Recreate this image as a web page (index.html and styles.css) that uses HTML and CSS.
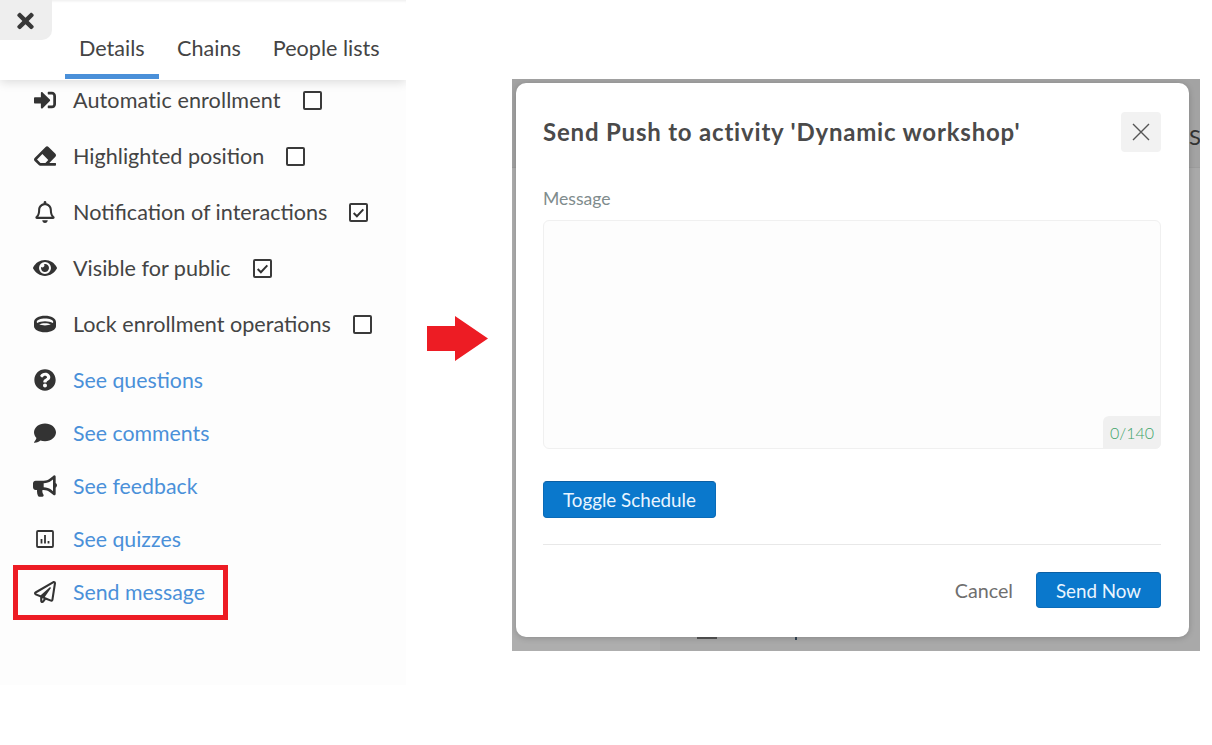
FILE: index.html
```html
<!DOCTYPE html>
<html lang="en">
<head>
<meta charset="utf-8">
<title>Send Push</title>
<link rel="stylesheet" href="styles.css">
</head>
<body>
<div class="page">
  <aside class="panel">
    <header class="panel-head">
      <button class="close-tab" type="button" aria-label="Close">
        <svg viewBox="0 0 352 512" class="close-glyph"><path d="M242.72 256l100.07-100.07c12.28-12.28 12.28-32.19 0-44.48l-22.24-22.24c-12.28-12.28-32.19-12.28-44.48 0L176 189.28 75.93 89.21c-12.28-12.28-32.19-12.28-44.48 0L9.21 111.45c-12.28 12.28-12.28 32.19 0 44.48L109.28 256 9.21 356.07c-12.28 12.28-12.28 32.19 0 44.48l22.24 22.24c12.28 12.28 32.2 12.28 44.48 0L176 322.72l100.07 100.07c12.28 12.28 32.2 12.28 44.48 0l22.24-22.24c12.28-12.28 12.28-32.19 0-44.48L242.72 256z"/></svg>
      </button>
      <nav class="tabs">
        <a class="tab tab-active">Details</a>
        <a class="tab">Chains</a>
        <a class="tab">People lists</a>
      </nav>
    </header>
    <ul class="list">
      <li class="row">
        <span class="ico"><svg viewBox="0 0 512 512"><path d="M416 448h-84c-6.6 0-12-5.4-12-12v-40c0-6.6 5.4-12 12-12h84c17.7 0 32-14.3 32-32V160c0-17.7-14.3-32-32-32h-84c-6.6 0-12-5.4-12-12V76c0-6.6 5.4-12 12-12h84c53 0 96 43 96 96v192c0 53-43 96-96 96zm-47-201L201 79c-15-15-41-4.5-41 17v96H24c-13.3 0-24 10.7-24 24v96c0 13.3 10.7 24 24 24h136v96c0 21.5 26 32 41 17l168-168c9.3-9.4 9.3-24.6 0-34z"/></svg></span>
        <span class="label label-wide">Automatic enrollment</span>
        <span class="check"></span>
      </li>
      <li class="row">
        <span class="ico"><svg viewBox="0 0 512 512"><path d="M497.941 273.941c18.745-18.745 18.745-49.137 0-67.882l-160-160c-18.745-18.745-49.136-18.746-67.883 0l-256 256c-18.745 18.745-18.745 49.137 0 67.882l96 96A48.004 48.004 0 0 0 144 480h356c6.627 0 12-5.373 12-12v-40c0-6.627-5.373-12-12-12H355.883l142.058-142.059zm-302.627-62.627l137.373 137.373L265.373 416H150.628l-80-80 124.686-124.686z"/></svg></span>
        <span class="label">Highlighted position</span>
        <span class="check"></span>
      </li>
      <li class="row">
        <span class="ico"><svg viewBox="0 0 448 512" class="narrow"><path d="M439.39 362.29c-19.32-20.76-55.47-51.99-55.47-154.29 0-77.7-54.48-139.9-127.94-155.16V32c0-17.67-14.32-32-31.98-32s-31.98 14.33-31.98 32v20.84C118.56 68.1 64.08 130.3 64.08 208c0 102.3-36.15 133.53-55.47 154.29-6 6.45-8.66 14.16-8.61 21.71.11 16.4 12.98 32 32.1 32h383.8c19.12 0 32-15.6 32.1-32 .05-7.55-2.61-15.27-8.61-21.71zM67.53 368c21.22-27.97 44.42-74.33 44.53-159.42 0-.2-.06-.38-.06-.58 0-61.86 50.14-112 112-112s112 50.14 112 112c0 .2-.06.38-.06.58.11 85.1 23.31 131.46 44.53 159.42H67.53zM224 512c35.32 0 63.97-28.65 63.97-64H160.03c0 35.35 28.65 64 63.97 64z"/></svg></span>
        <span class="label">Notification of interactions</span>
        <span class="check check-on"><svg viewBox="0 0 14 14"><path d="M2.5 7.5l3 3 6-6.5"/></svg></span>
      </li>
      <li class="row">
        <span class="ico"><svg viewBox="0 0 576 512" class="wide"><path d="M572.52 241.4C518.29 135.59 410.93 64 288 64S57.68 135.64 3.48 241.41a32.35 32.35 0 0 0 0 29.19C57.71 376.41 165.07 448 288 448s230.32-71.64 284.52-177.41a32.35 32.35 0 0 0 0-29.19zM288 400a144 144 0 1 1 144-144 143.93 143.93 0 0 1-144 144zm0-240a95.31 95.31 0 0 0-25.31 3.79 47.85 47.85 0 0 1-66.9 66.9A95.78 95.78 0 1 0 288 160z"/></svg></span>
        <span class="label">Visible for public</span>
        <span class="check check-on"><svg viewBox="0 0 14 14"><path d="M2.5 7.5l3 3 6-6.5"/></svg></span>
      </li>
      <li class="row">
        <span class="ico"><svg viewBox="0 0 512 512"><path d="M256 64C110.06 64 0 125.91 0 208v98.13C0 384.48 114.62 448 256 448s256-63.52 256-141.87V208c0-82.09-110.06-144-256-144zm0 64c106.04 0 192 35.82 192 80 0 9.26-3.97 18.12-10.91 26.39C392.15 208.21 328.17 192 256 192s-136.15 16.21-181.09 42.39C67.97 226.12 64 217.26 64 208c0-44.18 85.96-80 192-80zM120.43 264.64C155.04 249.93 201.64 240 256 240s100.96 9.93 135.57 24.64C356.84 279.07 308.93 288 256 288s-100.84-8.93-135.57-23.36z"/></svg></span>
        <span class="label">Lock enrollment operations</span>
        <span class="check"></span>
      </li>
      <li class="row row-link">
        <span class="ico"><svg viewBox="0 0 512 512"><path d="M504 256c0 136.997-111.043 248-248 248S8 392.997 8 256C8 119.083 119.043 8 256 8s248 111.083 248 248zM262.655 90c-54.497 0-89.255 22.957-116.549 63.758-3.536 5.286-2.353 12.415 2.715 16.258l34.699 26.31c5.205 3.947 12.621 3.008 16.665-2.122 17.864-22.658 30.113-35.797 57.303-35.797 20.429 0 45.698 13.148 45.698 32.958 0 14.976-12.363 22.667-32.534 33.976C247.128 238.528 216 254.941 216 296v4c0 6.627 5.373 12 12 12h56c6.627 0 12-5.373 12-12v-1.333c0-28.462 83.186-29.647 83.186-106.667 0-58.002-60.165-102-116.531-102zM256 338c-25.365 0-46 20.635-46 46 0 25.364 20.635 46 46 46s46-20.636 46-46c0-25.365-20.635-46-46-46z"/></svg></span>
        <a class="link">See questions</a>
      </li>
      <li class="row row-link">
        <span class="ico"><svg viewBox="0 0 512 512"><path d="M256 32C114.6 32 0 125.1 0 240c0 49.6 21.4 95 57 130.7C44.5 421.1 2.7 466 2.2 466.5c-2.2 2.3-2.8 5.7-1.5 8.7S4.8 480 8 480c66.3 0 116-31.8 140.6-51.4 32.7 12.3 69 19.4 107.4 19.4 141.4 0 256-93.1 256-208S397.4 32 256 32z"/></svg></span>
        <a class="link">See comments</a>
      </li>
      <li class="row row-link">
        <span class="ico"><svg viewBox="0 0 576 512" class="wide"><path d="M576 240c0-23.63-12.95-44.04-32-55.12V32.01C544 23.26 537.02 0 512 0c-7.12 0-14.19 2.38-19.98 7.02l-85.03 68.03C364.28 109.19 310.66 128 256 128H64c-35.35 0-64 28.65-64 64v96c0 35.35 28.65 64 64 64h33.7c-1.39 10.48-2.18 21.14-2.18 32 0 39.77 9.26 77.35 25.56 110.94 5.19 10.69 16.52 17.06 28.4 17.06h74.28c26.05 0 41.69-29.84 25.9-50.56-16.4-21.52-26.15-48.36-26.15-77.44 0-11.11 1.62-21.79 4.41-32H256c54.66 0 108.28 18.81 150.98 52.95l85.03 68.03a32.023 32.023 0 0 0 19.98 7.02c24.92 0 32-22.78 32-32V295.13C563.05 284.04 576 263.63 576 240zm-96 141.42l-33.05-26.44C392.95 311.78 325.12 288 256 288v-96c69.12 0 136.95-23.78 190.95-66.98L480 98.58v282.84z"/></svg></span>
        <a class="link">See feedback</a>
      </li>
      <li class="row row-link">
        <span class="ico"><svg viewBox="0 0 18 18" class="narrow poll"><rect x="1" y="1" width="16" height="16" rx="1"/><path d="M5.5 9v4.5M9 5v8.5M12.5 11v2.5"/></svg></span>
        <a class="link">See quizzes</a>
      </li>
      <li class="row row-link row-marked">
        <span class="ico"><svg viewBox="0 0 512 512"><path d="M440 6.5L24 246.4c-34.4 19.9-31.1 70.8 5.7 85.9L144 379.6V464c0 46.4 59.2 65.5 86.6 28.6l43.8-59.1 111.9 46.2c5.9 2.4 12.1 3.6 18.3 3.6 8.2 0 16.3-2.1 23.6-6.2 12.8-7.2 21.6-20 23.9-34.5l59.4-387.2c6.1-40.1-36.9-68.8-71.5-48.9zM192 464v-64.6l36.6 15.1L192 464zm212.6-28.7l-153.8-63.5L391 169.5c10.7-15.5-9.5-33.5-23.7-21.2L155.8 332.6 48 288 464 48l-59.4 387.3z"/></svg></span>
        <a class="link">Send message</a>
      </li>
    </ul>
  </aside>

  <div class="arrow-col">
    <svg class="arrow" viewBox="0 0 61 45"><path d="M0 10h28V0l33 22.5L28 45V35H0z"/></svg>
  </div>

  <section class="stage">
    <span class="behind-head"></span>
    <span class="behind-side"></span>
    <span class="behind-s">S</span>
    <span class="behind-a"></span>
    <span class="behind-b"></span>
    <div class="modal">
      <div class="modal-head">
        <h2 class="modal-title">Send Push to activity 'Dynamic workshop'</h2>
        <button class="modal-x" type="button" aria-label="Close">
          <svg viewBox="0 0 18 18"><path d="M1 1l16 16M17 1L1 17"/></svg>
        </button>
      </div>
      <label class="field-label" for="msg">Message</label>
      <div class="field">
        <textarea class="input" id="msg"></textarea>
        <span class="counter">0/140</span>
      </div>
      <div class="schedule">
        <button class="btn btn-toggle" type="button">Toggle Schedule</button>
      </div>
      <hr class="divider">
      <div class="modal-foot">
        <button class="cancel" type="button">Cancel</button>
        <button class="btn btn-send" type="button">Send Now</button>
      </div>
    </div>
  </section>
</div>
</body>
</html>
```

FILE: styles.css
```css
*, *::before, *::after { box-sizing: border-box; }
html, body { margin: 0; padding: 0; background: #fff; }
body { font-family: "Lato", "Liberation Sans", sans-serif; color: #444; overflow: hidden; }
button { font-family: inherit; }

.page { display: flex; align-items: flex-start; width: 1212px; height: 745px; }

/* left panel */
.panel { position: relative; flex: none; width: 406px; height: 685px; background: #fdfdfd; overflow: hidden; }
.panel-head { position: relative; height: 80px; background: #fff; box-shadow: 0 2px 10px rgba(0,0,0,.14), inset 0 3px 3px -2px rgba(0,0,0,.08); z-index: 1; }
.close-tab { position: absolute; left: 0; top: 0; width: 52px; height: 40px; padding: 0; border: 0; border-bottom-right-radius: 10px; background: #eee; display: flex; align-items: center; justify-content: center; }
.close-glyph { width: 17px; height: 24px; margin: 2px 1px 0 0; fill: #383838; }
.tabs { display: flex; gap: 4px; padding: 0 0 0 65px; height: 79px; }
.tab { display: flex; align-items: flex-start; padding: 34px 14px 0; font-size: 21.6px; line-height: 28px; color: #444; }
.tab-active { border-bottom: 5px solid #4a90d9; width: 94px; }

.list { list-style: none; margin: 0; padding: 6px 0 0 33px; }
.row { position: relative; display: flex; align-items: center; height: 28px; margin-bottom: 28px; font-size: 21.6px; line-height: 28px; color: #444; }
.row-link { margin-bottom: 25px; font-size: 21.3px; }
.ico { flex: none; display: flex; align-items: center; justify-content: center; width: 24px; height: 24px; margin-right: 16px; }
.ico svg { width: 22px; height: 22px; fill: #333; }
.ico svg.wide { width: 24px; height: 22px; }
.ico svg.narrow { width: 20px; height: 22px; }
.ico svg.poll { width: 18px; height: 18px; fill: none; stroke: #333; stroke-width: 1.8; }
.label { white-space: nowrap; }
.label-wide { letter-spacing: .1px; }
.link { color: #4a90d9; white-space: nowrap; }
.check { flex: none; display: block; width: 19px; height: 19px; margin-left: 22px; border: 2px solid #3a3a3a; border-radius: 2px; background: #fff; }
.check svg { display: block; width: 15px; height: 15px; fill: none; stroke: #333; stroke-width: 1.8; }
.row-marked::after { content: ""; position: absolute; left: -20px; top: -13px; width: 215px; height: 55px; border: 5px solid #ed1c24; }

/* arrow */
.arrow-col { flex: none; width: 106px; padding: 316px 0 0 21px; }
.arrow { display: block; width: 61px; height: 45px; fill: #ed1c24; }

/* dimmed page and modal */
.stage { position: relative; flex: none; width: 688px; height: 572px; margin-top: 79px; padding: 4px 0 0 4px; background: #a9a9a9; overflow: hidden; }
.behind-head { position: absolute; left: 0; right: 0; top: 0; height: 89px; background: #a3a3a3; border-bottom: 1px solid #9d9d9d; }
.behind-side { position: absolute; left: 0; top: 89px; bottom: 0; width: 148px; background: #aeaeae; }
.behind-s { position: absolute; left: 677px; top: 44px; font-size: 22px; line-height: 28px; color: #333; }
.behind-a { position: absolute; left: 185px; top: 558px; width: 20px; height: 2px; background: #555; }
.behind-b { position: absolute; left: 283px; top: 558px; width: 2px; height: 3px; background: #345; }

.modal { position: relative; display: flex; flex-direction: column; width: 673px; height: 554px; padding: 29px 28px 29px 27px; background: #fff; border-radius: 10px; box-shadow: 0 1px 6px rgba(0,0,0,.2); }
.modal-head { display: flex; align-items: center; justify-content: space-between; height: 40px; }
.modal-title { margin: 0; font-size: 24px; line-height: 40px; font-weight: 700; letter-spacing: .8px; color: #4a4a4a; white-space: nowrap; }
.modal-x { display: flex; align-items: center; justify-content: center; width: 40px; height: 40px; padding: 0; border: 0; border-radius: 4px; background: #f2f2f2; }
.modal-x svg { width: 18px; height: 18px; fill: none; stroke: #555; stroke-width: 1.4; }
.field-label { display: block; margin-top: 36px; font-size: 17.6px; line-height: 22px; color: #7f8c8d; }
.field { position: relative; flex: none; height: 229px; margin-top: 10px; }
.input { display: block; width: 100%; height: 100%; padding: 10px; border: 1px solid #f0f0f0; border-radius: 6px; background: #fdfdfd; resize: none; outline: 0; }
.counter { position: absolute; right: 0; bottom: 0; width: 58px; height: 33px; padding-top: 7px; text-align: center; font-size: 16px; line-height: 20px; font-weight: 300; color: #3fa368; background: #f0f0f0; border-radius: 6px 0 6px 0; }
.schedule { display: flex; margin-top: 32px; }
.btn { height: 37px; padding: 0; border: 1px solid #0a6bb8; border-top-color: #0b5fa3; border-radius: 4px; background: #0a78cc; color: #e9f5ff; font-size: 18.8px; line-height: 30px; }
.btn-toggle { width: 173px; }
.divider { flex: none; width: 100%; height: 1px; margin: 26px 0 0; border: 0; background: #e8e8e8; }
.modal-foot { display: flex; align-items: center; justify-content: flex-end; height: 36px; margin-top: 27px; }
.cancel { height: 36px; padding: 2px 0 0; margin-right: 23px; border: 0; background: none; color: #6f6f6f; font-size: 19.7px; line-height: 34px; }
.btn-send { width: 125px; height: 36px; padding-top: 2px; }
```
